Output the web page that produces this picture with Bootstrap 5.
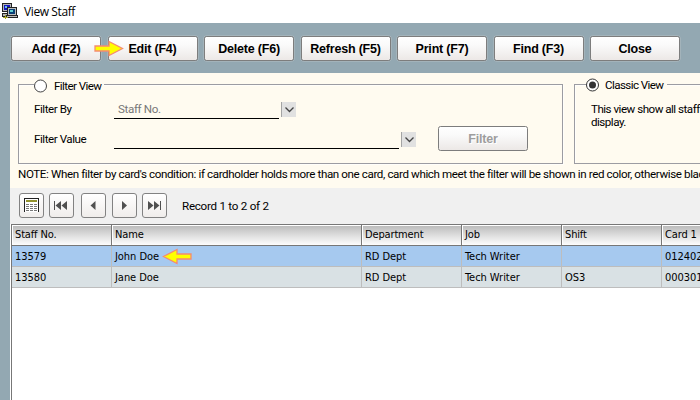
<!DOCTYPE html>
<html lang="en">
<head>
<meta charset="utf-8">
<title>View Staff</title>
<link href="https://cdn.jsdelivr.net/npm/bootstrap@5.3.0/dist/css/bootstrap.min.css" rel="stylesheet">
<style>
body{width:700px;height:400px;background:#93a8b2;color:#000;font:11.6px/14px Roboto,"Liberation Sans",Arial,sans-serif;overflow:hidden}
svg{display:block;flex:none}
.titlebar{height:23px;font:12px/23px "Open Sans","Noto Sans",sans-serif;letter-spacing:-.4px;padding-left:2px;gap:6px}
.toolbar{height:50px;padding:13px 0 0 11px;gap:6.5px}
.btn.cmd{width:90px;height:25px;flex:none;padding:0;border:1px solid #7d7d7d;border-radius:2.5px;background:linear-gradient(#fff,#fafafa 35%,#ece8e6);color:#000;font:bold 12.5px/22px "Liberation Sans",Arial,sans-serif;letter-spacing:-.2px;opacity:1;box-shadow:0 0 0 .5px #b3bdc1}
.btn.cmd.off{color:#9d9d9d;text-shadow:1px 1px #fff;box-shadow:none}
.pointer{position:absolute;z-index:2}
.workarea{margin-left:10px;width:690px;height:327px;background:#fff}
.filters{height:115px;background:#fffbf0;padding:11px 0 0 8px}
.group{height:80px;border:1px solid #9c9ca2;flex:none;box-shadow:inset 1px 1px #fffefa,1px 1px #fffefa}
.group.open-end{width:126px;border-right:0;box-shadow:inset 1px 1px #fffefa}
.group-title{position:absolute;top:-8px;height:16px;background:#fffbf0;line-height:16px;white-space:nowrap}
.field{height:30px;padding-left:15px}
.field-name{width:80px;padding-top:1px}
.pick{height:18px;border-bottom:1px solid #000;color:#777;padding-left:4px;line-height:17px}
.drop{width:15px;height:15px;background:#e1e1e1;border-left:1px solid #a4a4a4;margin:1px 0 0 2px;padding:5px 0 0 3px}
.records{height:36px;background:#f0f0f0;padding:5px 0 0 9px}
.btn.nav-key{width:25px;height:25px;flex:none;padding:0;border:1px solid #828282;border-radius:3px;background:linear-gradient(#fff,#f0edeb)}
.staff{margin-left:1px;width:689px;height:176px;border-left:1px solid #777;border-top:1px solid #777;font:11px/21px "DejaVu Sans Condensed","Noto Sans",sans-serif;letter-spacing:-.05px}
.line{display:grid;grid-template-columns:100px 250px 100px 100px 100px 38px;height:21px;border-bottom:1px solid #bdbdbd;white-space:nowrap}
.line>div{border-right:1px solid #bdbdbd;padding-left:3px;overflow:hidden}
.line.picked{background:#a6c9ef}
.line.plain{background:#d9e1e4}
.line.heads{background:linear-gradient(#fff 1px,#bcbcbc 1px,#e0e0e0 55%,#fdfdfd);border-color:#777;letter-spacing:-.15px}
.line.heads>div{border-color:#777;box-shadow:inset 1px 0 #fff;line-height:19px}
.line>div:last-child{border-right:0}
.s-field{letter-spacing:-.45px}.s-legend{letter-spacing:-.58px}.s-pick{letter-spacing:-.35px}.s-text{letter-spacing:-.5px}.s-count{letter-spacing:-.25px}.s-note{letter-spacing:-.385px}
</style>
<script src="https://cdn.jsdelivr.net/npm/bootstrap@5.3.0/dist/js/bootstrap.bundle.min.js"></script>
</head>
<body>
<header class="titlebar d-flex bg-white">
<svg width="16" height="17" viewBox="0 0 16 17" style="margin-top:3px" shape-rendering="crispEdges"><path fill="#b5b5b5" stroke="#222" d="M.5.5h9v8h-9zM.5 10.500h7v3h-7z"/><path fill="#1616c0" d="M2 2h6v5H2z"/><path fill="#6dc7e8" d="M3 3h2v2H3z"/><path fill="#bcbcbc" stroke="#222" d="M5.500 4.500h9v8h-9zM4.500 12.500h11v2h-11z"/><path fill="#083f76" d="M7 6h6v5H7z"/><path fill="#61d0d4" d="M8 7h3v2H8z"/><path fill="#a7a729" d="M1 14h5v1H1zM3 12h1v4H3z"/></svg>
<span>View Staff</span>
</header>
<nav class="toolbar d-flex position-relative">
<button class="btn cmd">Add (F2)</button><button class="btn cmd">Edit (F4)</button><button class="btn cmd">Delete (F6)</button><button class="btn cmd">Refresh (F5)</button><button class="btn cmd">Print (F7)</button><button class="btn cmd">Find (F3)</button><button class="btn cmd">Close</button>
<svg class="pointer" style="left:94px;top:17px" width="30" height="17" viewBox="0 0 30 17"><path d="M1 6H15V1.500L28.500 8.500 15 15.500V11H1Z" fill="#ff0" stroke="#f58b70" stroke-width="1.300"/></svg>
</nav>
<main class="workarea">
<section class="filters">
<div class="d-flex" style="gap:11px">
<div class="group position-relative" style="width:545px">
<div class="group-title d-flex" style="left:15px;width:70px"><svg width="14" height="16"><circle cx="6.500" cy="9" r="6" fill="#fff" stroke="#444"/></svg><span class="s-legend" style="margin:1px 0 0 6px">Filter View</span></div>
<div class="field d-flex" style="margin-top:16px"><span class="field-name s-field">Filter By</span><div class="pick s-pick" style="width:165px">Staff No.</div><span class="drop"><svg width="9" height="6"><path d="M.5.5 4.500 4.500 8.500.5" fill="none" stroke="#444" stroke-width="1.300"/></svg></span></div>
<div class="field d-flex"><span class="field-name s-field">Filter Value</span><div class="pick" style="width:285px"></div><span class="drop"><svg width="9" height="6"><path d="M.5.5 4.500 4.500 8.500.5" fill="none" stroke="#444" stroke-width="1.300"/></svg></span><button class="btn cmd off" disabled style="margin:-5px 0 0 22px">Filter</button></div>
</div>
<div class="group open-end position-relative">
<div class="group-title d-flex" style="left:11px;width:81px"><svg width="14" height="16"><circle cx="6.500" cy="8" r="6" fill="#fff" stroke="#333"/><circle cx="6.500" cy="8" r="3.500" fill="#333"/></svg><span class="s-legend" style="margin-left:5px">Classic View</span></div>
<div class="s-text text-nowrap" style="margin:18px 0 0 16px;line-height:13px">This view show all staff<br>display.</div>
</div>
</div>
<div class="s-note text-nowrap" style="margin-top:3px">NOTE: When filter by card's condition: if cardholder holds more than one card, card which meet the filter will be shown in red color, otherwise blac</div>
</section>
<section class="records d-flex">
<button class="btn nav-key"><svg width="23" height="23" shape-rendering="crispEdges"><path d="M4.500 18V4.500H18.500V18" fill="#fff" stroke="#222"/><path d="M6 7h11" stroke="#92922d" stroke-width="2"/><path d="M6 10.500h11M6 12.500h11M6 14.500h11M6 16.500h11" stroke="#777" stroke-dasharray="3 1"/></svg></button>
<button class="btn nav-key" style="margin-left:5px"><svg width="23" height="23" fill="#505050"><path d="M4 7h1v9H4zM11 7v9L5.500 11.500zM17 7v9L11.500 11.500z"/></svg></button>
<button class="btn nav-key" style="margin-left:7px"><svg width="23" height="23" fill="#505050"><path d="M13.500 7v9L8.500 11.500z"/></svg></button>
<button class="btn nav-key" style="margin-left:6px"><svg width="23" height="23" fill="#505050"><path d="M9 7v9L14 11.500z"/></svg></button>
<button class="btn nav-key" style="margin-left:5px"><svg width="23" height="23" fill="#505050"><path d="M17 7h1v9h-1zM5 7v9L10.500 11.500zM11 7v9L16.500 11.500z"/></svg></button>
<span class="s-count" style="margin:6px 0 0 15px">Record 1 to 2 of 2</span>
</section>
<section class="staff position-relative">
<div class="line heads"><div>Staff No.</div><div>Name</div><div>Department</div><div>Job</div><div>Shift</div><div>Card 1</div></div>
<div class="line picked"><div>13579</div><div>John Doe</div><div>RD Dept</div><div>Tech Writer</div><div></div><div>012402</div></div>
<div class="line plain"><div>13580</div><div>Jane Doe</div><div>RD Dept</div><div>Tech Writer</div><div>OS3</div><div>000301</div></div>
<svg class="pointer" style="left:150px;top:23px" width="30" height="17" viewBox="0 0 30 17"><path d="M29 6H15V1.500L1.500 8.500 15 15.500V11H29Z" fill="#ff0" stroke="#f58b70" stroke-width="1.300"/></svg>
</section>
</main>
</body>
</html>
